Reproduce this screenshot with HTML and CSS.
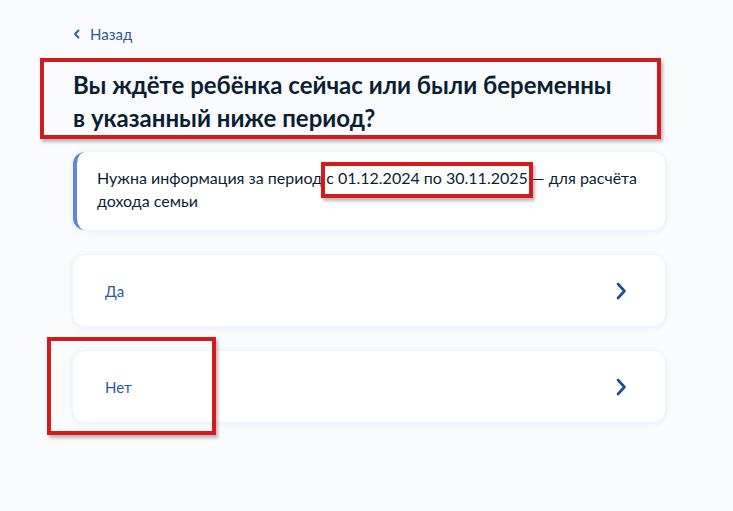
FILE: index.html
```html
<!DOCTYPE html>
<html lang="ru">

<head>
  <meta charset="UTF-8">
  <meta name="viewport" content="width=device-width, initial-scale=1.0">
  <title>Вопрос о беременности</title>
  <link rel="stylesheet" href="styles.css">
</head>
<body>
  <div class="screen">
    <div class="content">
      <a class="back" href="#">
        <svg class="back-icon" width="8" height="10" viewBox="0 0 8 10">
          <path d="M5.5 1.5 L2 5 L5.5 8.5" fill="none" stroke="currentColor" stroke-width="1.8" stroke-linecap="round" stroke-linejoin="round"/>
        </svg>
        Назад
      </a>

      <h1 class="title">Вы ждёте ребёнка сейчас или были беременны<br>в указанный ниже период?</h1>

      <div class="info">Нужна информация за период с 01.12.2024 по 30.11.2025 — для расчёта дохода семьи</div>

      <a class="answer" href="#">
        <span>Да</span>
        <svg class="answer-icon" width="12" height="18" viewBox="0 0 12 18">
          <path d="M3 2 L9.5 9 L3 16" fill="none" stroke="currentColor" stroke-width="2.6" stroke-linecap="round" stroke-linejoin="round"/>
        </svg>
      </a>

      <a class="answer" href="#">
        <span>Нет</span>
        <svg class="answer-icon" width="12" height="18" viewBox="0 0 12 18">
          <path d="M3 2 L9.5 9 L3 16" fill="none" stroke="currentColor" stroke-width="2.6" stroke-linecap="round" stroke-linejoin="round"/>
        </svg>
      </a>
    </div>

    <!-- красные рамки-пометки поверх страницы -->
    <div class="mark mark-title"></div>
    <div class="mark mark-period"></div>
    <div class="mark mark-no"></div>
  </div>
</body>
</html>
```

FILE: styles.css
```css
body {
  margin: 0;
  background: #f9fbfd;
  font-family: Lato, "Noto Sans", sans-serif;
  color: #0b1f33;
}

.screen {
  position: relative;
  width: 733px;
  height: 511px;
  overflow: hidden;
}

.content {
  width: 592px;
  margin-left: 73px;
  padding-top: 25px;
  display: flex;
  flex-direction: column;
}

.back {
  display: flex;
  align-items: center;
  gap: 9px;
  font-size: 15px;
  line-height: 18px;
  color: #2a58a8;
  text-decoration: none;
}

.title {
  margin: 25px 0 0;
  font-size: 24px;
  line-height: 33px;
  font-weight: 700;
  color: #0b1f33;
}

.info {
  margin-top: 18px;
  padding: 14px 24px 18px 20px;
  background: #fff;
  border-radius: 12px;
  border-left: 4px solid #5b87e2;
  box-shadow: 0 1px 6px rgba(110, 140, 180, 0.12);
  font-size: 16px;
  line-height: 23px;
  color: #0b1f33;
}

.answer {
  margin-top: 25px;
  height: 71px;
  padding: 0 38px 0 32px;
  display: flex;
  align-items: center;
  justify-content: space-between;
  background: #fff;
  border-radius: 12px;
  box-shadow: 0 1px 6px rgba(110, 140, 180, 0.12);
  font-size: 15px;
  color: #2a58a8;
  text-decoration: none;
}

.answer-icon {
  color: #1d4a97;
}

.mark {
  position: absolute;
  border: 4px solid #d41a1a;
  box-shadow: 2px 3px 3px rgba(60, 60, 60, 0.35);
}

.mark-title {
  left: 40px;
  top: 58px;
  width: 613px;
  height: 73px;
}

.mark-period {
  left: 321px;
  top: 162px;
  width: 204px;
  height: 28px;
}

.mark-no {
  left: 47px;
  top: 337px;
  width: 161px;
  height: 90px;
}
```
